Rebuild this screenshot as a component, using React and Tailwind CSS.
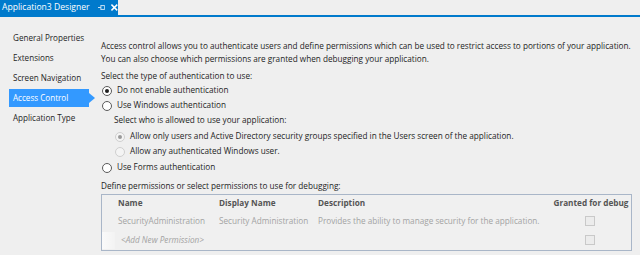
import React from "react";

const font = { fontFamily: '"Open Sans", "Noto Sans", sans-serif' };

function Radio({ checked, disabled }) {
  return (
    <span
      className={
        "inline-flex items-center justify-center w-[10px] h-[10px] rounded-full border mr-[5px] shrink-0 " +
        (disabled ? "border-[#cfcfcf] bg-[#f4f4f4]" : "border-[#5a5a5a] bg-white")
      }
    >
      {checked && (
        <span className={"w-[4px] h-[4px] rounded-full " + (disabled ? "bg-[#9a9a9a]" : "bg-[#1e1e1e]")} />
      )}
    </span>
  );
}

function Check() {
  return <span className="block w-[10px] h-[10px] border border-[#c9c9c9] bg-[#ececec]" />;
}

export default function App() {
  const nav = ["General Properties", "Extensions", "Screen Navigation", "Access Control", "Application Type"];

  return (
    <div className="w-[640px] h-[255px] bg-[#efefef] text-[#1e1e1e] overflow-hidden" style={font}>
      {/* tab strip */}
      <div className="border-b-2 border-[#007acc]">
        <div className="w-[118px] h-[15px] bg-[#007acc] text-white text-[8.6px] flex items-center pl-[2px] leading-none whitespace-nowrap">
          <span>Application3 Designer</span>
          <svg className="ml-[8px]" width="8" height="7" viewBox="0 0 8 7">
            <path d="M0 3.5h3M3 1v5M3 1.5h4M3 5.5h4M7 1.5v4" stroke="#cfe6f7" strokeWidth="1" fill="none" />
          </svg>
          <svg className="ml-[6px]" width="7" height="7" viewBox="0 0 7 7">
            <path d="M0.5 0.5l6 6M6.5 0.5l-6 6" stroke="white" strokeWidth="1.5" />
          </svg>
        </div>
      </div>

      <div className="flex">
        {/* left nav */}
        <div className="w-[101px] shrink-0 pt-[11px] text-[8.1px] whitespace-nowrap">
          {nav.map((n) =>
            n === "Access Control" ? (
              <div key={n} className="relative my-[1px] ml-[9px] w-[80px] h-[18px] bg-[#3399ff] text-white flex items-center pl-[4px]">
                {n}
                <span className="absolute right-[-6px] top-[4px] border-y-[5px] border-y-transparent border-l-[6px] border-l-[#3399ff]" />
              </div>
            ) : (
              <div key={n} className="h-[20px] flex items-center pl-[13px]">
                {n}
              </div>
            )
          )}
        </div>

        {/* content */}
        <div className="flex-1 min-w-0 pt-[22px] text-[8.2px] whitespace-nowrap">
          <div className="leading-[13px]">
            <div>Access control allows you to authenticate users and define permissions which can be used to restrict access to portions of your application.</div>
            <div>You can also choose which permissions are granted when debugging your application.</div>
          </div>

          <div className="mt-[5px] h-[13px] flex items-center">Select the type of authentication to use:</div>
          <div className="h-[15px] flex items-center pl-[1px]">
            <Radio checked />
            Do not enable authentication
          </div>
          <div className="h-[15px] flex items-center pl-[1px]">
            <Radio />
            Use Windows authentication
          </div>

          <div className="pl-[13px]">
            <div className="h-[15px] flex items-center">Select who is allowed to use your application:</div>
            <div className="mt-[1px] h-[15px] flex items-center pl-[1px]">
              <Radio checked disabled />
              Allow only users and Active Directory security groups specified in the Users screen of the application.
            </div>
            <div className="h-[15px] flex items-center pl-[1px]">
              <Radio disabled />
              Allow any authenticated Windows user.
            </div>
          </div>
          <div className="mt-[1px] h-[15px] flex items-center pl-[1px]">
            <Radio />
            Use Forms authentication
          </div>

          <div className="mt-[4px] h-[14px] flex items-center">Define permissions or select permissions to use for debugging:</div>

          {/* permissions table */}
          <div className="mt-[1px] mr-[8px] border border-[#a9b6c8] bg-[#f0f0f0]">
            <div className="grid grid-cols-[16px_101px_99px_1fr_80px] h-[17px] items-center font-bold text-[#555555]">
              <span />
              <span>Name</span>
              <span>Display Name</span>
              <span>Description</span>
              <span className="text-center">Granted for debug</span>
            </div>
            <div className="grid grid-cols-[16px_101px_99px_1fr_80px] h-[18px] items-center text-[#a3a3a3]">
              <span />
              <span>SecurityAdministration</span>
              <span>Security Administration</span>
              <span>Provides the ability to manage security for the application.</span>
              <span className="flex justify-center pr-[3px]">
                <Check />
              </span>
            </div>
            <div className="grid grid-cols-[16px_101px_99px_1fr_80px] h-[20px] items-center text-[#a3a3a3] italic">
              <span className="h-[17px] mr-[3px] bg-gradient-to-r from-[#fafafa] to-[#f3f3f3]" />
              <span className="pl-[3px]">&lt;Add New Permission&gt;</span>
              <span />
              <span />
              <span className="flex justify-center not-italic pr-[3px]">
                <Check />
              </span>
            </div>
          </div>
        </div>
      </div>
    </div>
  );
}
